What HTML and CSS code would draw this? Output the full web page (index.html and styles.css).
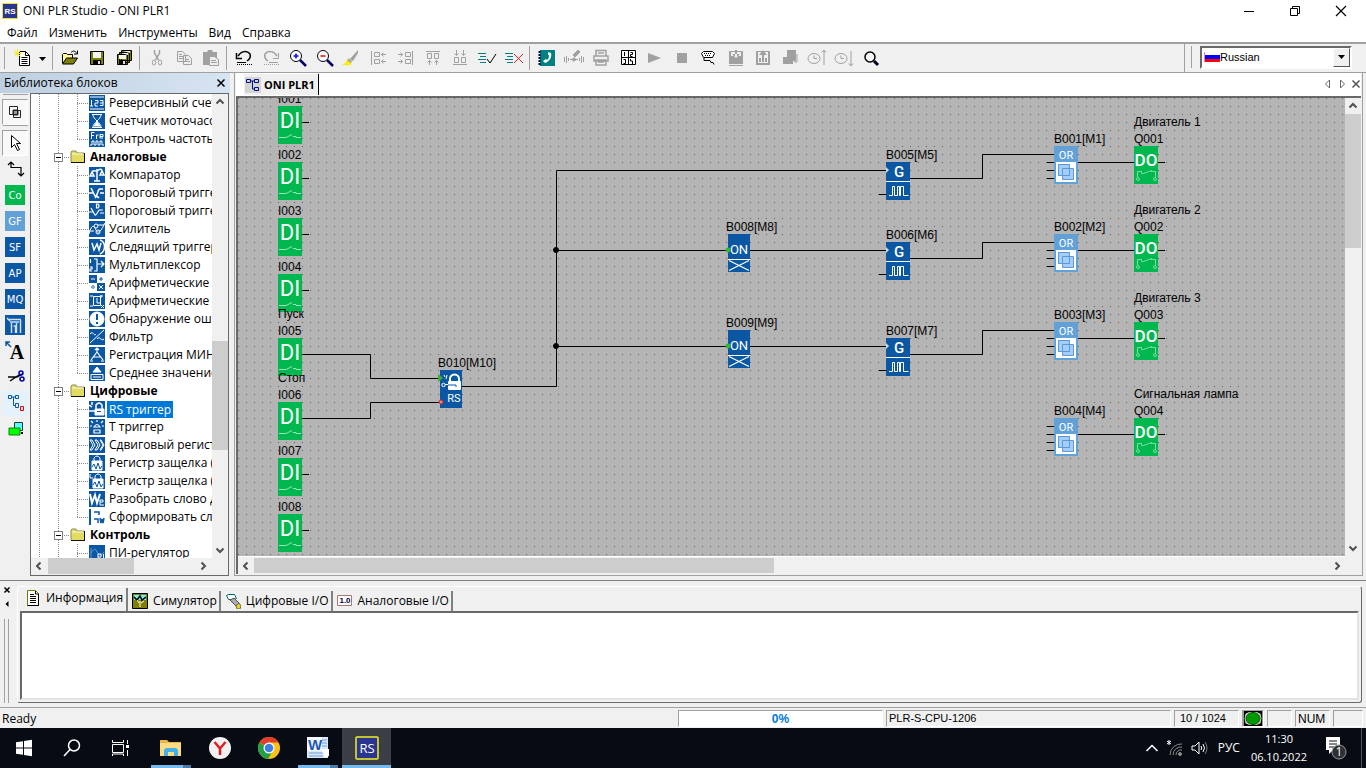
FILE: index.html
```html
<!DOCTYPE html>
<html lang="ru">
<head>
<meta charset="utf-8">
<title>ONI PLR Studio - ONI PLR1</title>
<link rel="stylesheet" href="styles.css">
</head>
<body>
<svg class="defs" aria-hidden="true">
  <symbol id="folder" viewBox="0 0 16 16"><path d="M1 13V3l1-1h4l1 2h7v9z" fill="#e3dc62"/><path d="M1 13V3l1-1h4l1 2h7" fill="none" stroke="#8a8a5c"/><path d="M2 5h11" stroke="#fffbd0"/><path d="M1 13.5h14M14.5 4v10" stroke="#111"/></symbol>
  <symbol id="left" viewBox="0 0 10 10"><path d="M6.500 1.500L3 5l3.500 3.500" fill="none" stroke="#505050" stroke-width="2"/></symbol>
  <symbol id="right" viewBox="0 0 10 10"><path d="M3.500 1.500L7 5 3.500 8.500" fill="none" stroke="#505050" stroke-width="2"/></symbol>
  <symbol id="up" viewBox="0 0 10 10"><path d="M1.500 6.500L5 3l3.500 3.500" fill="none" stroke="#505050" stroke-width="2"/></symbol>
  <symbol id="down" viewBox="0 0 10 10"><path d="M1.500 3.500L5 7l3.500-3.500" fill="none" stroke="#505050" stroke-width="2"/></symbol>
  <symbol id="di" viewBox="0 0 31 38" overflow="visible"><path d="M24 16.500h7" stroke="#000"/><path d="M0 0h24v38H0z" fill="#00b84f"/><text x="12" y="22" class="t-di">DI</text><path d="M1 31.500h7l6-3M15 30.500h3v1h5" fill="none" stroke="#9be3b6"/></symbol>
  <symbol id="do" viewBox="0 0 31 38" overflow="visible"><path d="M24 16.500h7" stroke="#000"/><path d="M0 0h24v38H0z" fill="#00b84f"/><text x="12" y="20" class="t-do">DO</text><path d="M3.500 31v-5.500h4v2M8 28l10-3.500M17 25.500h4.500V31" fill="none" stroke="#7fdca3"/><circle cx="4" cy="33" r="1.500" fill="none" stroke="#7fdca3"/><circle cx="21" cy="33" r="1.500" fill="none" stroke="#7fdca3"/></symbol>
  <symbol id="or" viewBox="0 0 31 38" overflow="visible"><path d="M-7 16.500h7M-7 24.500h7M-7 32.500h7" stroke="#000"/><path d="M0 0h24v38H0z" fill="#62a0d8"/><text x="12" y="13" class="t-or">OR</text><path d="M2 16h20v20H2z" fill="#fff"/><path d="M4.500 18.500h11v11h-11zM8.500 22.500h11v11h-11z" fill="#a6cdfa" stroke="#5a9ad6"/><path d="M4.500 18.500h11v11h-11z" fill="none" stroke="#5a9ad6"/></symbol>
  <symbol id="g" viewBox="0 0 31 38" overflow="visible"><path d="M-7 32.500h7" stroke="#000"/><path d="M0 0h24v38H0z" fill="#0b57a4"/><path d="M0 5l3 3-3 3z" fill="#c8d8e8"/><text x="13" y="15" class="t-g">G</text><path d="M0 19.500h24" stroke="#fff"/><path d="M3 33.500h3.500v-9h2v9h3v-9h2v9h1v-9h3v9h5" fill="none" stroke="#fff"/></symbol>
  <symbol id="on" viewBox="0 0 31 38" overflow="visible"><path d="M0 0h22v38H0z" fill="#0b57a4"/><text x="11" y="20" class="t-on">ON</text><path d="M0 25.500h22" stroke="#fff"/><path d="M1 26.500l20 10M21 26.500l-20 10" stroke="#fff" stroke-width="1.200"/><circle cx="0" cy="16" r="2.500" fill="#35b535"/></symbol>
  <symbol id="rs" viewBox="0 0 31 38" overflow="visible"><path d="M0 0h22v38H0z" fill="#0b57a4"/><path d="M10 11V9a4.500 4.500 0 0 1 9 0v2" fill="none" stroke="#fff" stroke-width="2"/><rect x="8" y="11" width="13" height="9" rx="1" fill="#fff"/><path d="M5 15h11v2" fill="none" stroke="#0b57a4"/><circle cx="3.500" cy="15" r="1.700" fill="none" stroke="#fff"/><path d="M5 14.500h3M4 5l1 2M7 5l-1 4" stroke="#fff"/><text x="14" y="32" class="t-rs">RS</text><path d="M-2 4l5 4-5 4z" fill="#3fae2a"/><circle cx="1" cy="32" r="2" fill="#c98" stroke="#e02020"/></symbol>
</svg>

<header class="titlebar">
  <svg class="logo" viewBox="0 0 16 16"><rect x=".5" y=".5" width="15" height="15" fill="#2a3590" stroke="#e8e02a"/><text x="8" y="11" class="t-logo">RS</text></svg>
  <h1>ONI PLR Studio - ONI PLR1</h1>
  <div class="window-buttons">
    <button aria-label="Свернуть"><svg viewBox="0 0 12 12"><path d="M1 6.500h10" stroke="#000"/></svg></button>
    <button aria-label="Развернуть"><svg viewBox="0 0 12 12"><path d="M1.500 3.500h7v7h-7zM3.500 3V1.500h7v7H9" fill="none" stroke="#000"/></svg></button>
    <button aria-label="Закрыть"><svg viewBox="0 0 12 12"><path d="M1 1l10 10M11 1L1 11" stroke="#000" stroke-width="1.200"/></svg></button>
  </div>
</header>
<nav class="menubar"><button>Файл</button><button>Изменить</button><button>Инструменты</button><button>Вид</button><button>Справка</button></nav>

<div class="toolbar" role="toolbar">
  <i class="grip"></i>
  <button aria-label="Создать"><svg viewBox="0 0 20 20"><path d="M6.500 3.500h6l4 4v10h-10z" fill="#fff" stroke="#000"/><path d="M12.500 3.500v4h4M8.500 9.500h6M8.500 11.500h6M8.500 13.500h6M8.500 15.500h6" fill="none" stroke="#000"/><path d="M1 2l7 7M8 2L2 8M4.500 1v8M1 5.500h8" stroke="#f3e92a"/></svg></button>
  <button class="drop" aria-label="Список"><svg viewBox="0 0 8 20"><path d="M0 9h7L3.500 13z"/></svg></button>
  <i class="sep"></i>
  <button aria-label="Открыть"><svg viewBox="0 0 20 20"><path d="M2.500 15V6.500l1-1h3l1 1h5V10" fill="#ffff9a" stroke="#000"/><path d="M2.500 16l4-6h11l-4 6z" fill="#808000" stroke="#000"/><path d="M11 4.500c2-2 4-2 6 1M17.500 2.500v3.500h-3.500" fill="none" stroke="#000"/></svg></button>
  <button aria-label="Сохранить"><svg viewBox="0 0 20 20"><path d="M3.500 3.500h13v13h-13z" fill="#808000" stroke="#000"/><path d="M6 4h8v6H6z" fill="#f4f4f4"/><path d="M6 12h8v4H6z"/><path d="M11 13h2v3h-2z" fill="#ddd"/></svg></button>
  <button aria-label="Сохранить все"><svg viewBox="0 0 20 20"><path d="M7.500 2.500h10v10h-10zM5.500 4.500h10v10h-10zM3.500 6.500h10v10h-10z" fill="#808000" stroke="#000"/><path d="M9 3h7v2M7 5h7v2M5 7h7v4H5z" fill="#f4f4f4"/><path d="M5 12h7v4H5z"/><path d="M9 13h2v3H9z" fill="#ddd"/></svg></button>
  <i class="sep"></i>
  <button aria-label="Вырезать" disabled><svg viewBox="0 0 20 20" fill="none" stroke="#a0a0a0"><path d="M7.500 2v3l4 7M12.500 2v3l-4 7" stroke-width="1.500"/><ellipse cx="7" cy="14.500" rx="1.700" ry="2.500"/><ellipse cx="13" cy="14.500" rx="1.700" ry="2.500"/></svg></button>
  <button aria-label="Копировать" disabled><svg viewBox="0 0 20 20" fill="#eee" stroke="#a0a0a0"><path d="M3.500 3.500h5l3 3v7h-8zM9.500 7.500h5l3 3v6h-8z"/><path d="M5 6.500h3M5 8.500h4M5 10.500h4M11 11.500h4M11 13.500h5"/></svg></button>
  <button aria-label="Вставить" disabled><svg viewBox="0 0 20 20" fill="#a0a0a0"><path d="M2 4h4l1-2h4l1 2h4v13H2z"/><path d="M8.500 8.500h5l4 3v6h-9z" fill="#eee" stroke="#a0a0a0"/><path d="M10 12.500h5M10 14.500h6" stroke="#a0a0a0"/></svg></button>
  <i class="sep"></i>
  <button aria-label="Отменить"><svg viewBox="0 0 20 20"><path d="M4 8c3-5 9-6 12-2 1 3 0 5-3 7" fill="none" stroke="#000" stroke-width="1.500"/><path d="M2.500 5v5.500H8" fill="none" stroke="#000" stroke-width="1.500"/><path d="M3 14.500h9" stroke="#000"/><path d="M3 16.500h15" stroke="#000" stroke-dasharray="1 1"/></svg></button>
  <button aria-label="Вернуть" disabled><svg viewBox="0 0 20 20"><path d="M16 8C13 3 7 2 4 6c-1 3 0 5 3 7" fill="none" stroke="#a0a0a0" stroke-width="1.500"/><path d="M17.500 5v5.500H12M8 14.500h9" fill="none" stroke="#a0a0a0"/><path d="M3 16.500h15" stroke="#a0a0a0" stroke-dasharray="1 1"/></svg></button>
  <button aria-label="Увеличить"><svg viewBox="0 0 20 20"><circle cx="8" cy="8" r="5.500" fill="#fff" stroke="#000"/><path d="M12 12l6 6" stroke="#006" stroke-width="2.500"/><path d="M5.500 8h5M8 5.500v5" stroke="#00f" stroke-width="1.500"/></svg></button>
  <button aria-label="Уменьшить"><svg viewBox="0 0 20 20"><circle cx="8" cy="8" r="5.500" fill="#fff" stroke="#000"/><path d="M12 12l6 6" stroke="#006" stroke-width="2.500"/><path d="M5.500 8h5" stroke="#e00" stroke-width="1.500"/></svg></button>
  <button aria-label="Маркер"><svg viewBox="0 0 20 20"><path d="M16 2l-8 9 3 2 5-8z" fill="#a0a0a0"/><path d="M6 11l-4 5h7l1-3z" fill="#fff200"/><path d="M1 16.500h8" stroke="#f5ef00"/><path d="M7 10l3 3-1 2-4-2z" fill="#aaa"/></svg></button>
  <button aria-label="По левому краю" disabled><svg viewBox="0 0 20 20" fill="none" stroke="#a0a0a0"><path d="M2.500 3v14M5.500 4.500h5v4h-5zM5.500 11.500h5v4h-5zM12 6.500h5M12 13.500h5M14.500 4.500l-2 2 2 2M14.500 11.500l-2 2 2 2"/></svg></button>
  <button aria-label="По правому краю" disabled><svg viewBox="0 0 20 20" fill="none" stroke="#a0a0a0"><path d="M16.500 3v14M9.500 4.500h5v4h-5zM9.500 11.500h5v4h-5zM2 6.500h5M2 13.500h5M4.500 4.500l2 2-2 2M4.500 11.500l2 2-2 2"/></svg></button>
  <button aria-label="По верху" disabled><svg viewBox="0 0 20 20" fill="none" stroke="#a0a0a0"><path d="M3 3.500h14M4.500 5.500h4v5h-4zM11.500 5.500h4v5h-4zM6.500 12v5M13.500 12v5M4.500 14.500l2-2 2 2M11.500 14.500l2-2 2 2"/></svg></button>
  <button aria-label="По низу" disabled><svg viewBox="0 0 20 20" fill="none" stroke="#a0a0a0"><path d="M3 16.500h14M4.500 9.500h4v5h-4zM11.500 9.500h4v5h-4zM6.500 2v5M13.500 2v5M4.500 5.500l2 2 2-2M11.500 5.500l2 2 2-2"/></svg></button>
  <button aria-label="Проверить"><svg viewBox="0 0 20 20" fill="none"><path d="M1 5.500h8M3 8.500h6M1 11.500h8M3 14.500h6" stroke="#008080"/><path d="M10 11l3 4 6-9" stroke="#000"/></svg></button>
  <button aria-label="Сбросить"><svg viewBox="0 0 20 20" fill="none"><path d="M1 5.500h8M3 8.500h6M1 11.500h8M3 14.500h6" stroke="#008080"/><path d="M10 6l9 9M19 6l-9 9" stroke="#e22"/></svg></button>
  <i class="sep"></i>
  <button aria-label="Телефон"><svg viewBox="0 0 20 20"><path d="M3 2h15v16H3z" fill="#008080"/><path d="M2.500 3v14" stroke="#004" stroke-width="2" stroke-dasharray="2 1"/><path d="M11 4l3 1c1 4-1 8-6 10l-2-2 3-2 1 1c2-2 2-3 2-5h-1z" fill="#fff"/></svg></button>
  <button aria-label="Связь" disabled><svg viewBox="0 0 20 20" fill="none" stroke="#a0a0a0"><path d="M.5 9v5M2.500 8v7M4.500 10v3M19.500 9v5M17.500 8v7M15.500 10v3M6 11.500h8"/><path d="M9 7l5-5 2 2-5 5z" fill="#a0a0a0"/><circle cx="10" cy="11.500" r="1.500" fill="#a0a0a0"/></svg></button>
  <button aria-label="Печать" disabled><svg viewBox="0 0 20 20" fill="none" stroke="#a0a0a0" stroke-width="1.500"><path d="M5 8V2.500h10V8M3 13V8h14v5zM5 12h10v5H5zM7 5h6M7 14h6"/></svg></button>
  <button aria-label="Таблица"><svg viewBox="0 0 20 20"><path d="M3.500 2.500h14v14h-14z" fill="#fff" stroke="#000"/><path d="M3 9.500h14M10.500 2v15" stroke="#000"/><path d="M6.500 4v4M12.500 4.500h2v2h-2v2h2M5.500 11.500h2v4h-2M12.500 11v2h2v3" fill="none" stroke="#000"/></svg></button>
  <button aria-label="Пуск симуляции" disabled><svg viewBox="0 0 20 20"><path d="M3 5l13 5-13 5z" fill="#a0a0a0"/></svg></button>
  <button aria-label="Стоп симуляции" disabled><svg viewBox="0 0 20 20"><path d="M5 5h10v10H5z" fill="#a0a0a0"/></svg></button>
  <button aria-label="Порт"><svg viewBox="0 0 20 20" fill="none" stroke="#000"><path d="M4.500 3.500h9l2 2-2 4h-9l-2-4z" fill="#fff"/><path d="M5 5.500h8M6 7.500h6" stroke-dasharray="1 1"/><path d="M5 10v2.500h6l1 2h2l1 2"/></svg></button>
  <button aria-label="Загрузить" disabled><svg viewBox="0 0 20 20" fill="#a0a0a0"><path d="M3 3h2v12H3zM15 3h2v12h-2zM3 8h14v8H3zM9 2h2v6H9zM6 6l4 4 4-4zM3 17h14v1H3zM3 3h14v1H3z"/></svg></button>
  <button aria-label="Выгрузить" disabled><svg viewBox="0 0 20 20" fill="#a0a0a0"><path d="M3 3h2v12H3zM15 3h2v12h-2zM9 5h2v9H9zM6 7l4-5 4 5zM3 15h14v2H3zM6 10h2v4H6zM12 10h2v4h-2zM3 3h14v1H3z"/></svg></button>
  <button aria-label="Модуль" disabled><svg viewBox="0 0 20 20" fill="#a0a0a0"><path d="M7 2h9v11h-3v3H3V9h4z"/><path d="M14 14h3V6" fill="none" stroke="#a0a0a0"/></svg></button>
  <button aria-label="Записать время" disabled><svg viewBox="0 0 20 20" fill="none" stroke="#a0a0a0"><ellipse cx="7" cy="10.500" rx="6" ry="5"/><path d="M7 7.500v3h3M17 17V2M14.500 4.500L17 2l2 2.500"/></svg></button>
  <button aria-label="Считать время" disabled><svg viewBox="0 0 20 20" fill="none" stroke="#a0a0a0"><ellipse cx="7" cy="10.500" rx="6" ry="5"/><path d="M7 7.500v3h3M17 3v15M14.500 15.500L17 18l2-2.500"/></svg></button>
  <button aria-label="Найти"><svg viewBox="0 0 20 20"><circle cx="9" cy="9" r="5" fill="#f6f6f6" stroke="#000" stroke-width="1.500"/><path d="M13 13l4 4" stroke="#002" stroke-width="3"/></svg></button>
  <div class="language">
    <i class="grip"></i>
    <label class="combo">
      <svg viewBox="0 0 16 12"><path d="M0 0h16v12H0z" fill="#fff"/><path d="M1 4h15v4H1z" fill="#00f"/><path d="M1 8h15v3H1z" fill="#f00"/><path d="M.5 1v10" stroke="#f6f"/></svg>
      <select aria-label="Язык"><option>Russian</option></select>
      <span class="combo-arrow"><svg viewBox="0 0 8 5"><path d="M0 0h7L3.500 4z"/></svg></span>
    </label>
  </div>
</div>

<main class="workspace">
  <aside class="library">
    <div class="caption"><h2>Библиотека блоков</h2><button aria-label="Закрыть панель"><svg viewBox="0 0 10 10"><path d="M1.500 1.500l7 7M8.500 1.500l-7 7" stroke="#000" stroke-width="1.500"/></svg></button></div>
    <div class="library-body">
      <div class="palette">
        <i class="hgrip"></i>
        <button class="pressed" aria-label="Наложение"><svg viewBox="0 0 20 20" fill="none" stroke="#222"><path d="M8 8h5v5H8z" fill="#999"/><path d="M4.500 4.500h8v8h-8zM8.500 8.500h7v7h-7z"/></svg></button>
        <i class="hgrip"></i>
        <button class="pressed" aria-label="Выбор"><svg viewBox="0 0 20 20"><path d="M6.500 2.500v12l3-3 3 6 2-1-3-6h4z" fill="#fff" stroke="#000"/></svg></button>
        <button aria-label="Связь"><svg viewBox="0 0 20 20" fill="none" stroke="#000" stroke-width="1.200"><path d="M6 3v5.500h10V17M3 6l3-3 3 3M13 14l3 3 3-3"/></svg></button>
        <button class="tile green">Co</button>
        <button class="tile sky">GF</button>
        <button class="tile">SF</button>
        <button class="tile">AP</button>
        <button class="tile">MQ</button>
        <button class="tile" aria-label="Прочее"><svg viewBox="0 0 20 20" fill="none" stroke="#cfe0f2"><path d="M4 4.500h12M5 7h9M6.500 8v10M11.500 8v10M15.500 5v13M8.500 11h2v7M2 3l3 3" stroke-width="1.500"/></svg></button>
        <button aria-label="Текст"><svg viewBox="0 0 20 20"><text x="12" y="18" class="t-a">A</text><path d="M1 1l5 5M1 5V1h4" fill="none" stroke="#0b57a4" stroke-width="1.500"/></svg></button>
        <button aria-label="Разрезать"><svg viewBox="0 0 20 20" fill="none"><path d="M3 10h9l5-3M5 14l9-6" stroke="#000" stroke-width="1.500"/><circle cx="16" cy="6" r="2" stroke="#00a" stroke-width="1.500"/><circle cx="17" cy="12" r="2" stroke="#00a" stroke-width="1.500"/></svg></button>
        <button class="hot" aria-label="Дерево"><svg viewBox="0 0 20 20" fill="none" stroke="#0b57a4"><path d="M3.500 2.500h3v3h-3zM10.500 2.500h3v3h-3zM7 4h3M8.500 4v8.500h2M10.500 10.500h3v4h-3z"/><path d="M15.500 13.500h3v4h-3z" stroke="#e00"/></svg></button>
        <button aria-label="Монитор"><svg viewBox="0 0 20 20"><path d="M9.500 3.500h8v8h-8z" fill="#5ff" stroke="#333"/><path d="M4 9h11v7H4z" fill="#0f0" stroke="#080"/><path d="M16 13h2v2h-2z"/></svg></button>
      </div>
      <div class="tree-box">
        <ul class="tree">
          <li class="leaf"><svg viewBox="0 0 16 16"><path d="M1 2h14M1 14h14M2.500 5v6M1 11h3M6 5.500h3v2.500H6v3h3M11 5.500h3v5h-3M11 8h3"/></svg><span>Реверсивный счет</span></li>
          <li class="leaf"><svg viewBox="0 0 16 16"><path d="M3 1.500h10M3 14.500h10M4 2c0 4 8 8 8 12M12 2c0 4-8 8-8 12"/><path d="M5 13l3-4 3 4z" fill="#fff"/></svg><span>Счетчик моточасо</span></li>
          <li class="leaf end"><svg viewBox="0 0 16 16"><path d="M2.500 8V1.500h3M2 4.500h3M7.500 8V4h2M11 5.500h3V3.500h-3V7h3M1 14h2v-4h2v4h2v-4h2v4h2v-4h2v4h2"/></svg><span>Контроль частоты</span></li>
          <li class="group"><button class="toggle" aria-label="Свернуть"></button><svg><use href="#folder"/></svg><b>Аналоговые</b></li>
          <li class="leaf"><svg viewBox="0 0 16 16"><path d="M8 2v12M3 5c2-3 3 0 5-1s3-3 5-1M5 14h6M1 9l2-4 2 4zM11 8l2-4 2 4z" stroke-width="1.500"/></svg><span>Компаратор</span></li>
          <li class="leaf"><svg viewBox="0 0 16 16"><path d="M0 8h4M2 3l4 8c2 2 3-8 5-7h3M11 8h4M6 13l2-2 2 2" stroke-width="1.500"/></svg><span>Пороговый тригге</span></li>
          <li class="leaf"><svg viewBox="0 0 16 16"><path d="M0 9h4M2 5l4 7c2 1 3-6 5-5h3M11 10h4M7.500 1v4h1.500q2-2 0-4z" stroke-width="1.200"/></svg><span>Пороговый тригге</span></li>
          <li class="leaf"><svg viewBox="0 0 16 16"><path d="M0 13C3 2 5 5 7 9s4 3 9-7M0 10h5M9 4h6"/><circle cx="7" cy="5" r="2"/><circle cx="9" cy="11" r="2"/></svg><span>Усилитель</span></li>
          <li class="leaf"><svg viewBox="0 0 16 16"><path d="M3 4l2 7 3-6 2 6 2-7M11 1c6 2 6 11 0 14" stroke-width="1.500"/></svg><span>Следящий триггер</span></li>
          <li class="leaf"><svg viewBox="0 0 16 16"><path d="M5 2h3v5h7M5 14h3V7M12 4l3 3-3 3M1.500 2v4M1 10h2v2H1v2h2" stroke-width="1.200"/></svg><span>Мультиплексор</span></li>
          <li class="leaf"><svg viewBox="0 0 16 16"><path d="M8 0h8v8H8zM0 8h8v8H0z" fill="#fff" stroke="none"/><path d="M2 4h4M10 10l4 4M14 10l-4 4"/><path d="M10 4h4M12 2v4M2 12h4M4 10v1M4 13v1" stroke="#0b57a4"/></svg><span>Арифметические с</span></li>
          <li class="leaf"><svg viewBox="0 0 16 16"><path d="M4.500 3.500h7v9h-7zM8 5v5h3M1 3h3M12 2v3M14 3h-3M1 13h3M12 12l3 3M15 12l-3 3"/></svg><span>Арифметические с</span></li>
          <li class="leaf"><svg viewBox="0 0 16 16"><circle cx="8" cy="8" r="7" fill="#fff"/><path d="M8 3v6M8 11v2" stroke="#0b57a4" stroke-width="2"/></svg><span>Обнаружение оши</span></li>
          <li class="leaf"><svg viewBox="0 0 16 16"><path d="M1 14L15 1M1 5c3-4 4 3 6 0M8 10c3-4 4 3 7 0"/></svg><span>Фильтр</span></li>
          <li class="leaf"><svg viewBox="0 0 16 16"><path d="M8 1v5M8 5l-6 8M8 5l6 8M4 10h8M1 14h3M12 14h3M6 3l2-2 2 2" stroke-width="1.200"/></svg><span>Регистрация МИН</span></li>
          <li class="leaf end"><svg viewBox="0 0 16 16"><path d="M2 14.500h12v-5H2zM4 12h8" /><path d="M4 7l4-5 4 5z" fill="#fff"/></svg><span>Среднее значение</span></li>
          <li class="group"><button class="toggle" aria-label="Свернуть"></button><svg><use href="#folder"/></svg><b>Цифровые</b></li>
          <li class="leaf selected"><svg viewBox="0 0 16 16"><path d="M7 8V4q3-4 6 0v4M0 4l3 2M3 1v3M0 10h7" stroke-width="1.500"/><path d="M6 8h9v6H6z" fill="#fff"/><path d="M8 10.500h4" stroke="#0b57a4"/></svg><span>RS триггер</span></li>
          <li class="leaf"><svg viewBox="0 0 16 16"><path d="M5 8q3-5 6 0zM5 14v-3h6v3zM8 1v2M2 2l2 2M14 2l-2 2M1 7h2M13 7h2" stroke-width="1.200"/></svg><span>T триггер</span></li>
          <li class="leaf"><svg viewBox="0 0 16 16"><path d="M1 3h2l3 5-3 5H1l3-5zM6 3h2l3 5-3 5H6l3-5zM11 3h1l3 5-3 5h-1l3-5z"/></svg><span>Сдвиговый регистр</span></li>
          <li class="leaf"><svg viewBox="0 0 16 16"><path d="M5 6V3q3-4 6 0v3"/><path d="M3 6h10v9H3z" fill="#fff"/><path d="M3 12l2-3 2 5 2-6 2 6 2-3" stroke="#0b57a4"/></svg><span>Регистр защелка (1</span></li>
          <li class="leaf"><svg viewBox="0 0 16 16"><path d="M1 1v4h3M6 6V3q3-4 6 0v3"/><path d="M4 6h10v9H4z" fill="#fff"/><path d="M4 12l2-3 2 5 2-6 2 6 2-3" stroke="#0b57a4"/></svg><span>Регистр защелка (3</span></li>
          <li class="leaf"><svg viewBox="0 0 16 16"><path d="M1 3l2 9 3-8 2 8 3-9" stroke-width="2"/><path d="M11 11h3V9h-3v5h4"/></svg><span>Разобрать слово д</span></li>
          <li class="leaf end"><svg viewBox="0 0 16 16"><path d="M2 0h14v16H2z" fill="#fff" stroke="none"/><path d="M5 3h5v3M5 10h4v4M11 9l1 5 1-4 1 4 1-5" stroke="#0b57a4" stroke-width="1.500"/></svg><span>Сформировать сло</span></li>
          <li class="group"><button class="toggle" aria-label="Свернуть"></button><svg><use href="#folder"/></svg><b>Контроль</b></li>
          <li class="leaf"><svg viewBox="0 0 16 16"><path d="M2 14V3M2 8q4-7 6-1t7 0" stroke="#5b9ad4"/><path d="M9 15V9h3v3H9M14.500 9v6"/></svg><span>ПИ-регулятор</span></li>
        </ul>
        <div class="scroll v tree-v"><button aria-label="Вверх"><svg><use href="#up"/></svg></button><i class="before"></i><i class="thumb"></i><i class="after"></i><button aria-label="Вниз"><svg><use href="#down"/></svg></button></div>
        <div class="scroll h tree-h"><button aria-label="Влево"><svg><use href="#left"/></svg></button><i class="thumb"></i><i class="after"></i><button aria-label="Вправо"><svg><use href="#right"/></svg></button></div>
      </div>
    </div>
  </aside>

  <section class="document">
    <div class="doc-tabs">
      <button class="doc-tab"><svg viewBox="0 0 16 16" fill="none" stroke="#001080"><path d="M0 0h16v16H0z" fill="#d4d4d4" stroke="none"/><path d="M1.500 2.500h4v3h-4zM9.500 2.500h4v3h-4zM9.500 10.500h4v3h-4zM6 4h3M7.500 4v8H9"/></svg>ONI PLR1</button>
      <div class="doc-nav">
        <button aria-label="Предыдущая"><svg viewBox="0 0 10 10"><path d="M6.500 1v8L2.500 5z" fill="none" stroke="#666"/></svg></button>
        <button aria-label="Следующая"><svg viewBox="0 0 10 10"><path d="M3.500 1v8l4-4z" fill="none" stroke="#666"/></svg></button>
        <button aria-label="Закрыть вкладку"><svg viewBox="0 0 10 10"><path d="M1.500 1.500l7 7M8.500 1.500l-7 7" stroke="#555" stroke-width="1.500"/></svg></button>
      </div>
    </div>
    <div class="canvas-box">
      <svg class="diagram">
        <g transform="translate(-238 -98)">
          <g class="wires">
            <path d="M302 354.500h68.500v24H440"/>
            <path d="M302 418.500h68.500v-16H440"/>
            <path d="M462 386.500h94.500v-216H886"/>
            <path d="M556 250.500h172M750 250.500h136M556 346.500h172M750 346.500h136"/>
            <path d="M910 178.500h72.500v-24H1054"/>
            <path d="M910 258.500h72.500v-16H1054"/>
            <path d="M910 354.500h72.500v-24H1054"/>
            <path d="M1078 162.500h56M1078 250.500h56M1078 338.500h56M1078 434.500h56M1047 426.500h7"/>
            <circle cx="556" cy="250" r="2.500"/><circle cx="556" cy="346" r="2.500"/>
          </g>
          <g>
            <use href="#di" x="278" y="106" width="31" height="38"/><use href="#di" x="278" y="162" width="31" height="38"/>
            <use href="#di" x="278" y="218" width="31" height="38"/><use href="#di" x="278" y="274" width="31" height="38"/>
            <use href="#di" x="278" y="338" width="31" height="38"/><use href="#di" x="278" y="402" width="31" height="38"/>
            <use href="#di" x="278" y="458" width="31" height="38"/><use href="#di" x="278" y="514" width="31" height="38"/>
            <use href="#rs" x="440" y="370" width="31" height="38"/>
            <use href="#on" x="728" y="234" width="31" height="38"/><use href="#on" x="728" y="330" width="31" height="38"/>
            <use href="#g" x="886" y="162" width="31" height="38"/><use href="#g" x="886" y="242" width="31" height="38"/><use href="#g" x="886" y="338" width="31" height="38"/>
            <use href="#or" x="1054" y="146" width="31" height="38"/><use href="#or" x="1054" y="234" width="31" height="38"/>
            <use href="#or" x="1054" y="322" width="31" height="38"/><use href="#or" x="1054" y="418" width="31" height="38"/>
            <use href="#do" x="1134" y="146" width="31" height="38"/><use href="#do" x="1134" y="234" width="31" height="38"/>
            <use href="#do" x="1134" y="322" width="31" height="38"/><use href="#do" x="1134" y="418" width="31" height="38"/>
          </g>
          <g class="labels">
            <text x="278" y="103">I001</text><text x="278" y="159">I002</text><text x="278" y="215">I003</text><text x="278" y="271">I004</text>
            <text x="278" y="335">I005</text><text x="278" y="399">I006</text><text x="278" y="455">I007</text><text x="278" y="511">I008</text>
            <text x="438" y="367">B010[M10]</text>
            <text x="726" y="231">B008[M8]</text><text x="726" y="327">B009[M9]</text>
            <text x="886" y="159">B005[M5]</text><text x="886" y="239">B006[M6]</text><text x="886" y="335">B007[M7]</text>
            <text x="1054" y="143">B001[M1]</text><text x="1054" y="231">B002[M2]</text><text x="1054" y="319">B003[M3]</text><text x="1054" y="415">B004[M4]</text>
            <text x="1134" y="143">Q001</text><text x="1134" y="231">Q002</text><text x="1134" y="319">Q003</text><text x="1134" y="415">Q004</text>
          </g>
          <g class="comments">
            <text x="278" y="318">Пуск</text><text x="278" y="382">Стоп</text>
            <text x="1134" y="126">Двигатель 1</text><text x="1134" y="214">Двигатель 2</text><text x="1134" y="302">Двигатель 3</text><text x="1134" y="398">Сигнальная лампа</text>
          </g>
        </g>
      </svg>
      <div class="scroll v doc-v"><button aria-label="Вверх"><svg><use href="#up"/></svg></button><i class="thumb"></i><i class="after"></i><button aria-label="Вниз"><svg><use href="#down"/></svg></button></div>
      <div class="scroll h doc-h"><button aria-label="Влево"><svg><use href="#left"/></svg></button><i class="thumb"></i><i class="after"></i><button aria-label="Вправо"><svg><use href="#right"/></svg></button></div>
    </div>
  </section>
</main>

<section class="output">
  <div class="output-side">
    <button aria-label="Закрыть панель"><svg viewBox="0 0 8 8"><path d="M1.500 1.500l5 5M6.500 1.500l-5 5" stroke="#000" stroke-width="1.500"/></svg></button>
    <button aria-label="Свернуть панель"><svg viewBox="0 0 8 8"><path d="M5.500 1v6L2.500 4z"/></svg></button>
    <i class="vgrip"></i>
  </div>
  <div class="output-main">
    <div class="tabs" role="tablist">
      <button role="tab" class="tab active"><svg viewBox="0 0 16 16"><path d="M2.500.5h8l3 3v12h-11z" fill="#fff" stroke="#770"/><path d="M13.500 4v11.500h-11M10.500 1v3h3M5 4.500h4M5 6.500h6M5 8.500h6M5 10.500h6M5 12.500h6" fill="none" stroke="#000"/></svg>Информация</button>
      <button role="tab" class="tab"><svg viewBox="0 0 16 16"><path d="M.5.500h15v15H.5z" fill="#808000" stroke="#000"/><path d="M2 2h12v5H2z" fill="#7ee"/><path d="M2 4l3 3 3-4 2 4 4-3" fill="none" stroke="#000" stroke-width="1.500"/><path d="M5 7l2 3M9 10l3-2M8 8v6" stroke="#fff"/></svg>Симулятор</button>
      <button role="tab" class="tab"><svg viewBox="0 0 16 16"><path d="M1.500 2.500l2-1h6l2 4-2 1h-6z" fill="#fff" stroke="#066"/><path d="M5 7l4-2 5 5-3 3z" fill="#aaa" stroke="#555"/><path d="M11 13l3-3 2 3-1 3h-3z" fill="#e8d818" stroke="#665"/></svg>Цифровые I/O</button>
      <button role="tab" class="tab"><svg viewBox="0 0 16 16"><path d="M.5 2.500h14v10H.5z" fill="#fff" stroke="#a77"/><text x="8" y="10" class="t-num">1.0</text></svg>Аналоговые I/O</button>
    </div>
    <div class="output-text"></div>
  </div>
</section>

<footer class="status">
  <span class="ready">Ready</span>
  <span class="cell progress">0%</span>
  <span class="cell device">PLR-S-CPU-1206</span>
  <span class="cell memory">10 / 1024</span>
  <span class="cell lamp"><svg viewBox="0 0 20 16"><path d="M0 0h20v16H0z"/><path d="M2 3l4-2h8l4 2 1 5-1 5-4 2H6l-4-2-1-5z" fill="#d8d8d8"/><ellipse cx="10" cy="8" rx="7.500" ry="6.500" fill="#009a00" stroke="#050"/></svg></span>
  <span class="cell blank"></span>
  <span class="cell num">NUM</span>
  <span class="cell last"></span>
</footer>

<nav class="taskbar">
  <button aria-label="Пуск"><svg viewBox="0 0 24 24" fill="#fff"><path d="M4 6.200l7-1v6.300H4zM12 5l8-1.200v7.700h-8zM4 12.500h7v6.300l-7-1zM12 12.500h8v7.700L12 19z"/></svg></button>
  <button aria-label="Поиск"><svg viewBox="0 0 24 24" fill="none" stroke="#fff" stroke-width="1.500"><circle cx="14" cy="9.500" r="5.500"/><path d="M10 13.500L4 20"/></svg></button>
  <button aria-label="Представление задач"><svg viewBox="0 0 24 24" fill="none" stroke="#fff"><path d="M4.500 8.500h11v8h-11zM4.500 4v2.500h11V4M4.500 20v-2h11v2M19.500 4v4M19.500 14v6"/><path d="M18 9h3v3h-3z" fill="#fff" stroke="none"/></svg></button>
  <button class="app running" aria-label="Проводник"><svg viewBox="0 0 24 24"><path d="M1 4h7l2 2h12v14H1z" fill="#e8b64a"/><path d="M1 7h21v13H1z" fill="#fbdc84"/><path d="M5 20v-6l2-2h10l2 2v6h-4v-4H9v4z" fill="#41b0e8"/></svg></button>
  <button class="app" aria-label="Яндекс"><svg viewBox="0 0 24 24"><circle cx="12" cy="12" r="11" fill="#f2f2f2"/><path d="M6.500 6l5.500 6.500V19M17.500 6L12 12.500" fill="none" stroke="#e02020" stroke-width="2.500"/></svg></button>
  <button class="app" aria-label="Chrome"><svg viewBox="0 0 24 24"><circle cx="12" cy="12" r="11" fill="#fbc116"/><path d="M12 12L2.500 6.500A11 11 0 0 1 21.500 6.500H12z" fill="#e33b2e"/><path d="M2.500 6.500A11 11 0 0 0 11 23l5-8.500-4-2z" fill="#23a047"/><circle cx="12" cy="12" r="5.500" fill="#fff"/><circle cx="12" cy="12" r="4.300" fill="#3d7de8"/></svg></button>
  <button class="app running" aria-label="Word"><svg viewBox="0 0 24 24"><path d="M1 1h21v21H1z" fill="#dbe8f8"/><path d="M16 4h5M16 7h5M16 10h5M3 17h16M3 20h14" stroke="#6e9cd8"/><path d="M1 1h15v14H1z" fill="#f4f8ff"/><text x="9" y="14" class="t-w">W</text><path d="M15 13h8v7l-4 2z" fill="#fff"/></svg></button>
  <button class="app current" aria-label="ONI PLR Studio"><svg viewBox="0 0 24 24"><rect x="1" y="1" width="22" height="22" rx="1" fill="#2a3590" stroke="#f5ee20" stroke-width="1.500"/><text x="12" y="17" class="t-task">RS</text></svg></button>
  <div class="tray">
    <button class="chev" aria-label="Скрытые значки"><svg viewBox="0 0 16 16"><path d="M2.500 11L8 5.500l5.500 5.500" fill="none" stroke="#fff" stroke-width="1.500"/></svg></button>
    <button aria-label="Сеть"><svg viewBox="0 0 18 18" fill="none" stroke="#888"><path d="M4 16A11 11 0 0 1 16 5M7 16a8 8 0 0 1 9-8M10 16a5 5 0 0 1 6-5"/><circle cx="14" cy="15" r="1.500" fill="#999"/><path d="M3 1v5M1 2l4 3M5 2L1 5" stroke="#fff"/></svg></button>
    <button aria-label="Звук"><svg viewBox="0 0 18 18" fill="none" stroke="#fff"><path d="M2 7h3l4-4v12l-4-4H2z"/><path d="M11 7q1.500 2 0 4M13 5q3 4 0 8"/><path d="M15 3q4 6 0 12" stroke="#777"/></svg></button>
    <button class="lang">РУС</button>
    <div class="clock"><time>11:30</time><time>06.10.2022</time></div>
    <button class="notify" aria-label="Уведомления"><svg viewBox="0 0 24 24"><path d="M3 1h14v13h-7l-4 4v-4H3z" fill="#fff"/><path d="M6 5h8M6 8h8M6 11h5" stroke="#111"/><circle cx="16" cy="16" r="7" fill="#2c2f33" stroke="#999"/><text x="16" y="20" class="t-badge">1</text></svg></button>
    <i class="desk"></i>
  </div>
</nav>
</body>
</html>
```
FILE: styles.css
```css
* { box-sizing: border-box; }
html, body { height: 100%; }
body { margin: 0; display: flex; flex-direction: column; background: #f0f0f0; color: #000; font: 12px/18px "Open Sans", "Noto Sans", sans-serif; overflow: hidden; }
button { margin: 0; padding: 0; border: 0; background: none; font: inherit; color: inherit; display: flex; align-items: center; justify-content: center; }
h1, h2, ul { margin: 0; padding: 0; font-size: inherit; font-weight: normal; list-style: none; }
svg { display: block; flex: none; }
i { display: block; flex: none; }
.defs { display: none; }
text { text-anchor: middle; fill: #fff; }

/* Lettering inside icons */
.t-di, .t-do, .t-or, .t-g, .t-on, .t-rs { font-family: "Liberation Sans Narrow", "Roboto", sans-serif; }
.t-di { font-size: 22px; }
.t-do { font-size: 17px; font-weight: 500; }
.t-or { font-size: 11px; }
.t-g { font-size: 15px; font-weight: 500; }
.t-on { font-size: 13px; }
.t-rs { font-size: 11px; }
.t-logo { font: bold 8px "Liberation Sans", sans-serif; }
.t-task { font: 13px "Open Sans", sans-serif; }
.t-a { font: bold 20px "Liberation Serif", serif; fill: #000; }
.t-num { font: bold 8px "Liberation Sans", sans-serif; fill: #003; }
.t-w { font: bold 15px "Liberation Sans", sans-serif; fill: #1d5bb5; }
.t-badge { font: 12px "Open Sans", sans-serif; }

/* Title and menu */
.titlebar { display: flex; align-items: center; height: 24px; padding: 0 2px 2px; background: #fff; flex: none; }
.logo { width: 16px; height: 16px; margin-right: 5px; }
.window-buttons { display: flex; margin-left: auto; }
.window-buttons button { width: 46px; height: 22px; }
.window-buttons svg { width: 12px; height: 12px; }
.menubar { display: flex; gap: 11px; height: 18px; padding-left: 7px; background: #fff; flex: none; }

/* Toolbar */
.toolbar { display: flex; align-items: center; height: 31px; padding-left: 4px; border-top: 2px solid #a0a0a0; border-bottom: 1px solid #a0a0a0; flex: none; }
.toolbar > button { width: 27px; height: 26px; flex: none; }
.toolbar > button svg { width: 20px; height: 20px; }
.toolbar > .drop { width: 14px; }
.toolbar > .drop svg { width: 8px; }
.grip { width: 1px; height: 22px; margin-right: 4px; background: #a0a0a0; }
.sep { width: 1px; height: 24px; margin: 0 3px 0 2px; background: #a0a0a0; }
.language { display: flex; align-items: center; gap: 4px; height: 28px; margin-left: auto; width: 182px; border-left: 1px solid #a0a0a0; padding: 0 0 2px 6px; }
.combo { display: flex; align-items: center; width: 152px; height: 23px; padding-left: 2px; border: 2px solid; border-color: #696969 #fff #fff #696969; background: #fff; }
.combo > svg { width: 16px; height: 12px; }
.combo select { flex: 1; min-width: 0; height: 18px; padding: 0; border: 0; background: none; appearance: none; font: 11px "Liberation Sans", sans-serif; color: #000; }
.combo-arrow { display: flex; align-items: center; justify-content: center; width: 17px; height: 19px; background: #f0f0f0; border: 1px solid; border-color: #fff #555 #555 #fff; }
.combo-arrow svg { width: 8px; height: 5px; }

/* Workspace */
.workspace { display: flex; flex: 1; min-height: 0; padding-bottom: 4px; border-bottom: 1px solid #808080; }
.library { display: flex; flex-direction: column; width: 230px; margin-right: 4px; flex: none; }
.caption { display: flex; align-items: center; justify-content: space-between; height: 20px; padding: 0 4px; background: linear-gradient(90deg, #bdcfe0, #d7e4f2); flex: none; }
.caption button svg { width: 10px; height: 10px; }
.library-body { display: flex; flex: 1; min-height: 0; padding-right: 1px; }
.palette { display: flex; flex-direction: column; align-items: center; width: 30px; padding-top: 1px; }
.palette button { width: 26px; height: 26px; flex: none; }
.palette button svg { width: 20px; height: 20px; }
.palette .hgrip { width: 25px; height: 5px; border-top: 1px solid #a0a0a0; }
.palette .pressed { background: #f8f8f8; border: 1px solid; border-color: #a0a0a0 #fff #fff #a0a0a0; }
.palette .tile { width: 20px; height: 20px; margin: 3px 0; background: #0b57a4; color: #fff; font: 10px "DejaVu Sans", sans-serif; }
.palette .green { background: #00b84f; }
.palette .sky { background: #62a0d8; }
.palette .hot { background: #e5f1fb; }

/* Scrollbars */
.scroll { display: flex; background: #f0f0f0; }
.scroll.v { flex-direction: column; }
.scroll button { width: 16px; height: 16px; flex: none; }
.scroll button svg { width: 10px; height: 10px; }
.scroll .thumb { background: #cdcdcd; }

/* Block tree */
.tree-box { display: grid; flex: 1; min-width: 0; grid-template: minmax(0, 1fr) 17px / minmax(0, 1fr) 16px; background: #f0f0f0; border: 1px solid #696969; }
.tree { overflow: hidden; background: #fff; }
.tree li { display: flex; align-items: center; height: 18px; white-space: nowrap; background-repeat: no-repeat;
  --v: repeating-linear-gradient(#8a8a8a 0 1px, transparent 1px 2px);
  --h: repeating-linear-gradient(90deg, #8a8a8a 0 1px, transparent 1px 2px); }
.tree .leaf { padding-left: 58px; background-image: var(--v), var(--v), var(--v), var(--h); background-size: 1px 100%, 1px 100%, 1px 100%, 12px 1px; background-position: 8px 0, 27px 0, 46px 0, 46px 9px; }
.tree .end { background-size: 1px 100%, 1px 100%, 1px 10px, 12px 1px; }
.tree .group { padding-left: 23px; background-image: var(--v), var(--v), var(--h); background-size: 1px 100%, 1px 100%, 12px 1px; background-position: 8px 0, 27px 0, 27px 9px; }
.tree svg { width: 16px; height: 16px; }
.tree .leaf svg { background: #0b57a4; fill: none; stroke: #fff; }
.tree .leaf span { margin-left: 2px; padding: 0 2px; }
.tree .selected span { background: #0078d7; color: #fff; line-height: 17px; }
.tree b { padding-left: 4px; }
.toggle { width: 9px; height: 9px; margin-right: 7px; background: #fff; border: 1px solid #808080; }
.toggle::before { content: ""; width: 5px; height: 1px; background: #000; }
.tree-v .before { flex: 231; }
.tree-v .thumb { flex: 109; }
.tree-v .after { flex: 92; }
.tree-h { grid-column: 1 / 3; padding-right: 17px; }
.tree-h .thumb { width: 86px; margin: 0 0 1px 1px; }
.tree-h .after { flex: 1; }

/* Document */
.document { display: flex; flex-direction: column; flex: 1; min-width: 0; margin-right: 3px; border: 1px solid #a0a0a0; border-top: 0; padding: 0 1px 1px; }
.doc-tabs { display: flex; align-items: flex-end; height: 23px; padding: 0 0 1px 8px; background: #fff; flex: none; }
.doc-tab { height: 21px; gap: 3px; padding: 0 3px 0 1px; background: #f0f0f0; border-right: 1px solid #000; font-size: 11px; font-weight: bold; }
.doc-tab svg { width: 16px; height: 16px; }
.doc-nav { display: flex; gap: 4px; margin: auto 0 auto auto; }
.doc-nav svg { width: 10px; height: 10px; }
.canvas-box { display: grid; flex: 1; min-height: 0; grid-template: minmax(0, 1fr) 18px / minmax(0, 1fr) 16px; border: solid #696969; border-width: 2px 0 0 2px; }
.diagram { width: 100%; height: 100%; overflow: hidden; background: #b4b4b4 conic-gradient(from 270deg at 1px 1px, #606060 90deg, transparent 0) 0 0 / 8px 8px; }
.wires { fill: none; stroke: #000; }
.wires circle { fill: #000; }
.labels text, .comments text { text-anchor: start; fill: #000; font: 12px "Liberation Sans", sans-serif; }
.doc-v .thumb { flex: 133; }
.doc-v .after { flex: 290; }
.doc-h { grid-column: 1; padding: 1px 0; border-top: 1px solid #fff; }
.doc-h .thumb { flex: 519; }
.doc-h .after { flex: 554; }

/* Output panel */
.output { display: flex; height: 127px; padding: 5px 4px 4px 0; border-bottom: 1px solid #a0a0a0; flex: none; }
.output-side { display: flex; flex-direction: column; align-items: center; gap: 6px; width: 13px; margin-right: 4px; }
.output-side svg { width: 8px; height: 8px; }
.vgrip { flex: 1; width: 5px; margin-top: 5px; border: solid #a0a0a0; border-width: 0 1px; }
.output-main { display: flex; flex-direction: column; flex: 1; min-width: 0; border: 1px solid; border-color: #fff #696969 #696969 #fff; border-radius: 3px; padding: 0 2px 2px; }
.tabs { display: flex; align-items: flex-end; height: 24px; flex: none; }
.tab { height: 20px; gap: 5px; padding: 0 2px; margin-right: 2px; border-right: 2px solid #808080; }
.tab.active { height: 23px; padding: 0 3px 3px 5px; }
.tab svg { width: 16px; height: 16px; }
.output-text { flex: 1; background: #fff; border: 2px solid; border-color: #696969 #e3e3e3 #e3e3e3 #696969; }

/* Status bar */
.status { display: flex; align-items: center; gap: 3px; height: 20px; padding: 1px 3px 0 2px; flex: none; }
.ready { flex: 1; }
.cell { height: 17px; padding-left: 2px; border: 1px solid; border-color: #a0a0a0 #fff #fff #a0a0a0; font: 11px/14px "Liberation Sans", sans-serif; }
.progress { width: 205px; padding: 0; background: #fff; color: #0078d7; font: bold 12px/16px "Liberation Sans", sans-serif; text-align: center; }
.device { width: 285px; }
.memory { width: 65px; padding-left: 5px; }
.lamp { width: 22px; padding: 0; }
.lamp svg { width: 20px; height: 15px; }
.blank { width: 25px; }
.num { width: 35px; font-size: 12px; line-height: 16px; }
.last { width: 30px; }

/* Taskbar */
.taskbar { display: flex; height: 40px; background: #070c14; color: #fff; flex: none; }
.taskbar > button { width: 48px; }
.taskbar > button svg { width: 24px; height: 24px; }
.taskbar > .app { width: 49px; border-bottom: 3px solid transparent; padding-top: 3px; }
.taskbar > .app:nth-child(4) { margin-left: 2px; }
.taskbar > .running { background: linear-gradient(90deg, #76b9ed 32px, #4d7ba6 0) center bottom / 40px 3px no-repeat border-box; }
.taskbar > .current { background: #3b3f45; border-bottom-color: #76b9ed; }
.tray { display: flex; align-items: center; gap: 6px; margin-left: auto; }
.tray svg { width: 18px; height: 18px; }
.tray .chev svg { width: 16px; height: 16px; }
.tray .lang { margin-left: 4px; }
.clock { display: flex; flex-direction: column; align-items: center; margin-left: 5px; font-size: 11px; }
.notify { margin: 0 8px 0 10px; }
.tray .notify svg { width: 24px; height: 24px; }
.desk { width: 5px; height: 40px; border-left: 1px solid #555; }
```
